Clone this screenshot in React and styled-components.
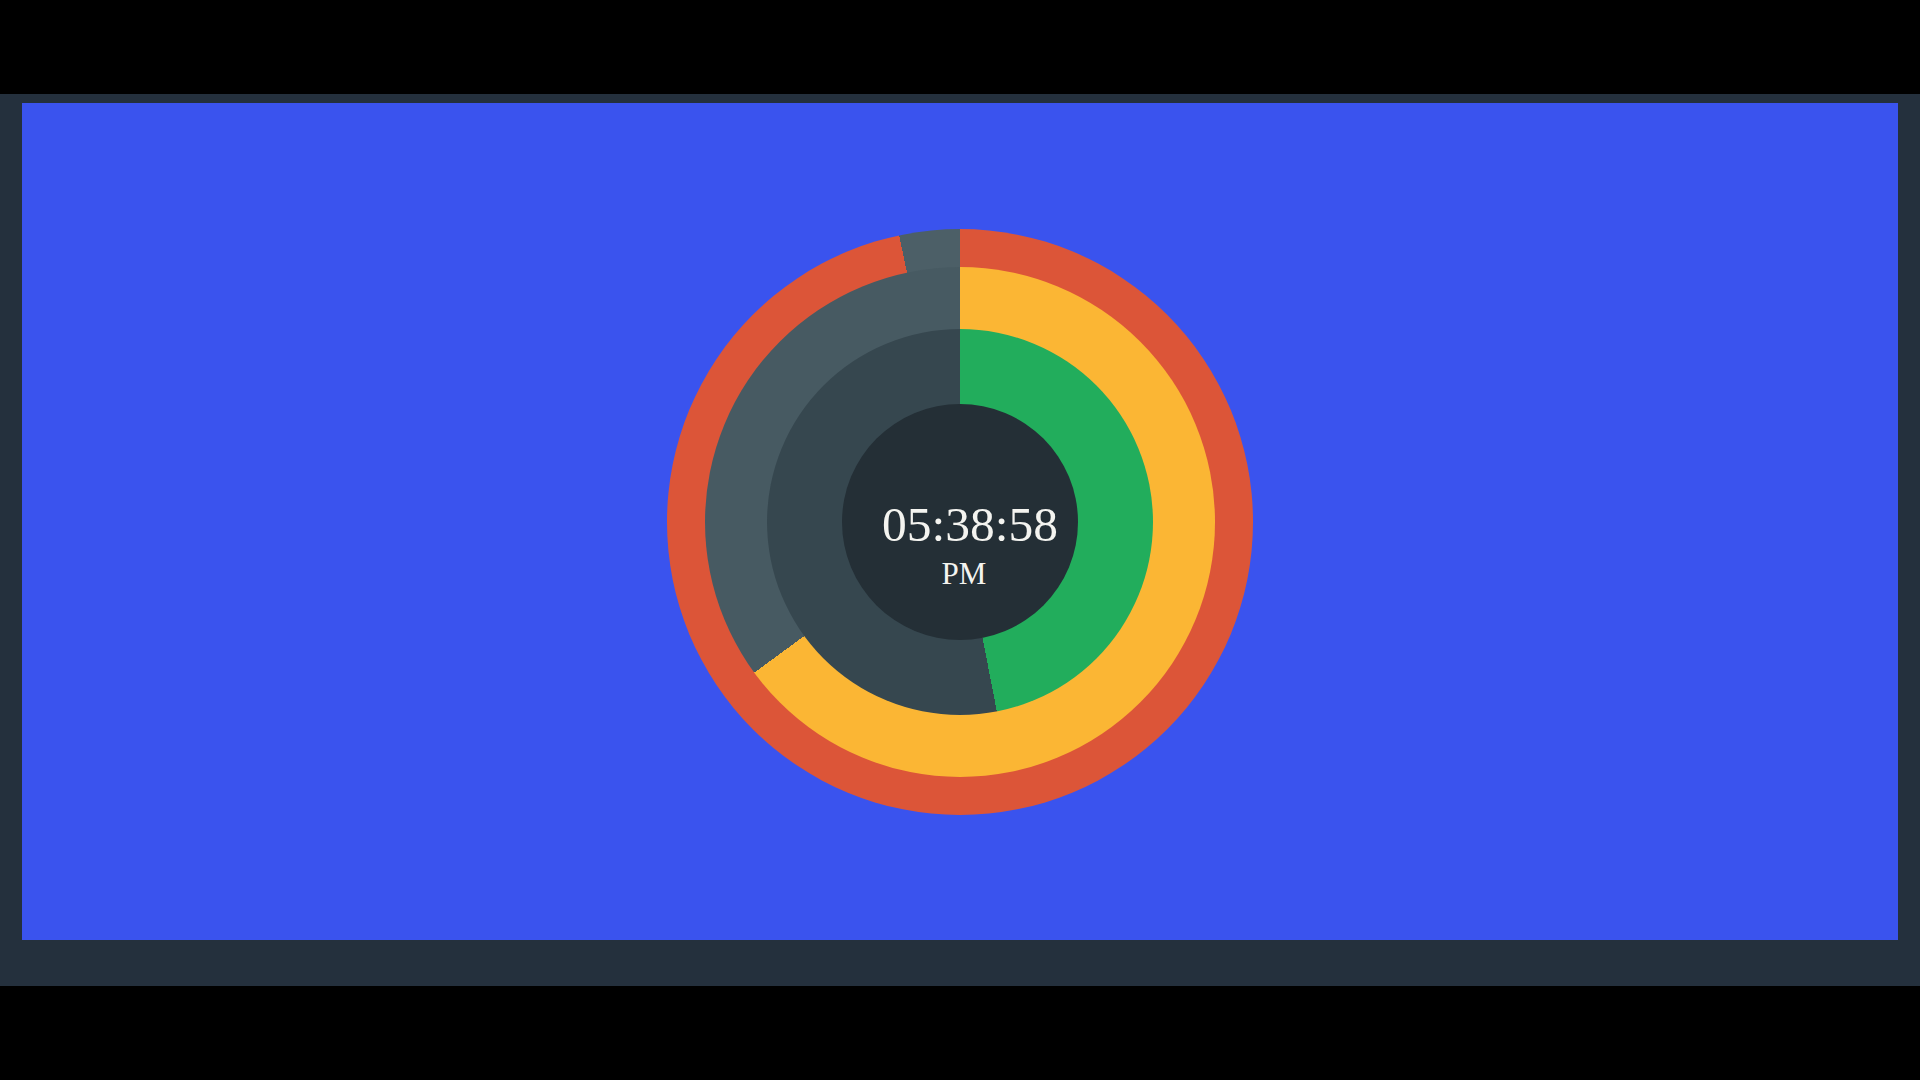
import React from 'react';
import styled, { createGlobalStyle } from 'styled-components';

const GlobalStyle = createGlobalStyle`
  html, body {
    margin: 0;
    padding: 0;
    background: #000;
  }
  body {
    font-family: "Liberation Serif", "Times New Roman", serif;
  }
`;

const Page = styled.div`
  height: 1080px;
  display: flex;
  align-items: center;
  background: #000;
`;

const Frame = styled.section`
  box-sizing: border-box;
  width: 100%;
  height: 892px;
  padding: 9px 22px 46px;
  background: #24303d;
  display: flex;
`;

const Stage = styled.main`
  flex: 1;
  background: #3a53ee;
  display: flex;
  align-items: center;
  justify-content: center;
`;

// one ring of the clock, filled clockwise from the top by `deg`
const Ring = styled.div`
  width: ${p => p.size}px;
  height: ${p => p.size}px;
  border-radius: 50%;
  display: flex;
  align-items: center;
  justify-content: center;
  background: conic-gradient(
    ${p => p.color} 0deg ${p => p.deg}deg,
    ${p => p.rest} ${p => p.deg}deg 360deg
  );
`;

const Face = styled.div`
  width: 236px;
  height: 236px;
  border-radius: 50%;
  background: #242f36;
  display: flex;
  flex-direction: column;
  align-items: center;
  justify-content: center;
  color: #f4f4f0;
`;

const Readout = styled.div`
  display: flex;
  flex-direction: column;
  align-items: center;
  padding-top: 46px;
`;

const Time = styled.div`
  font-size: 49.5px;
  line-height: 1;
  padding-left: 20px;
`;

const Meridiem = styled.div`
  font-size: 31px;
  line-height: 1;
  margin-top: 8px;
  padding-left: 8px;
`;

const hours = 5, minutes = 38, seconds = 58;

export default function App() {
  const secDeg = seconds / 60 * 360;
  const minDeg = (minutes + seconds / 60) / 60 * 360;
  const hourDeg = (hours + minutes / 60) / 12 * 360;
  const pad = n => String(n).padStart(2, '0');

  return (
    <Page>
      <GlobalStyle />
      <Frame>
        <Stage>
          <Ring size={586} color="#dc5538" rest="#4c5f67" deg={secDeg}>
            <Ring size={510} color="#fbb634" rest="#475a62" deg={minDeg}>
              <Ring size={386} color="#22ad5c" rest="#36474f" deg={hourDeg}>
                <Face>
                  <Readout>
                    <Time>{pad(hours)}:{pad(minutes)}:{pad(seconds)}</Time>
                    <Meridiem>PM</Meridiem>
                  </Readout>
                </Face>
              </Ring>
            </Ring>
          </Ring>
        </Stage>
      </Frame>
    </Page>
  );
}
